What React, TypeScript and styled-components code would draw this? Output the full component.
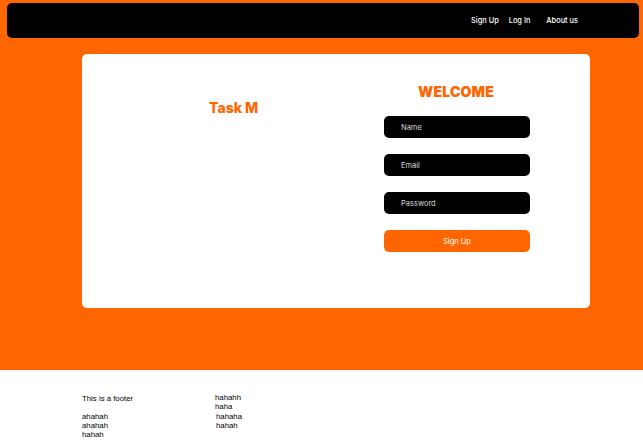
import React from "react";
import styled, { createGlobalStyle } from "styled-components";

const Global = createGlobalStyle`
  html, body { margin: 0; padding: 0; background: #ffffff; }
  body { font-family: Inter, "Liberation Sans", sans-serif; }
`;

const Hero = styled.section`
  background: #ff6600;
  height: 370px;
  padding-top: 3px;
  box-sizing: border-box;
`;

const Nav = styled.nav`
  margin: 0 4px 0 7px;
  height: 35px;
  background: #000;
  border-radius: 5px;
  display: flex;
  align-items: center;
  justify-content: flex-end;
  padding-right: 61px;
`;

const NavLink = styled.a<{ $gap?: number }>`
  color: #fff;
  font-size: 7.4px;
  font-weight: 500;
  margin-left: ${(p) => p.$gap ?? 0}px;
  text-decoration: none;
`;

const Card = styled.div`
  margin: 16px 0 0 82px;
  width: 508px;
  height: 254px;
  background: #fff;
  border-radius: 5px;
  display: flex;
`;

const LeftCol = styled.div`
  width: 302px;
  padding: 45px 0 0 127px;
  box-sizing: border-box;
`;

const Brand = styled.h1`
  margin: 0;
  color: #ff6600;
  font-size: 14px;
  font-weight: 800;
  line-height: 17px;
`;

const RightCol = styled.div`
  width: 146px;
  padding-top: 29px;
  display: flex;
  flex-direction: column;
`;

const Title = styled.h2`
  margin: 0 0 16px;
  color: #ff6600;
  font-size: 14px;
  font-weight: 900;
  text-align: center;
  line-height: 17px;
  letter-spacing: 0.2px;
  padding-right: 2px;
`;

const Field = styled.div`
  height: 22px;
  background: #000;
  border-radius: 5px;
  color: #dcdcdc;
  font-size: 7.5px;
  display: flex;
  align-items: center;
  padding-left: 17px;
  margin-bottom: 16px;
`;

const Button = styled.div`
  height: 22px;
  background: #ff6600;
  border-radius: 5px;
  color: #fff;
  font-size: 7.5px;
  display: flex;
  align-items: center;
  justify-content: center;
`;

const Footer = styled.footer`
  display: flex;
  padding: 23px 0 0 82px;
  font-family: "Liberation Sans", Arial, sans-serif;
  font-size: 7.8px;
  color: #000;
`;

const FootCol = styled.div<{ $w: number }>`
  width: ${(p) => p.$w}px;
`;

const Line = styled.div<{ $top?: number; $indent?: number }>`
  line-height: 9px;
  margin-top: ${(p) => p.$top ?? 0}px;
  padding-left: ${(p) => p.$indent ?? 0}px;
`;

export default function App() {
  return (
    <>
      <Global />
      <Hero>
        <Nav>
          <NavLink>Sign Up</NavLink>
          <NavLink $gap={10}>Log In</NavLink>
          <NavLink $gap={16}>About us</NavLink>
        </Nav>
        <Card>
          <LeftCol>
            <Brand>Task M</Brand>
          </LeftCol>
          <RightCol>
            <Title>WELCOME</Title>
            <Field>Name</Field>
            <Field>Email</Field>
            <Field>Password</Field>
            <Button>Sign Up</Button>
          </RightCol>
        </Card>
      </Hero>
      <Footer>
        <FootCol $w={133}>
          <Line $top={1}>This is a footer</Line>
          <Line $top={9}>ahahah</Line>
          <Line>ahahah</Line>
          <Line>hahah</Line>
        </FootCol>
        <FootCol $w={100}>
          <Line>hahahh</Line>
          <Line>haha</Line>
          <Line $top={1} $indent={1}>hahaha</Line>
          <Line $indent={1}>hahah</Line>
        </FootCol>
      </Footer>
    </>
  );
}
